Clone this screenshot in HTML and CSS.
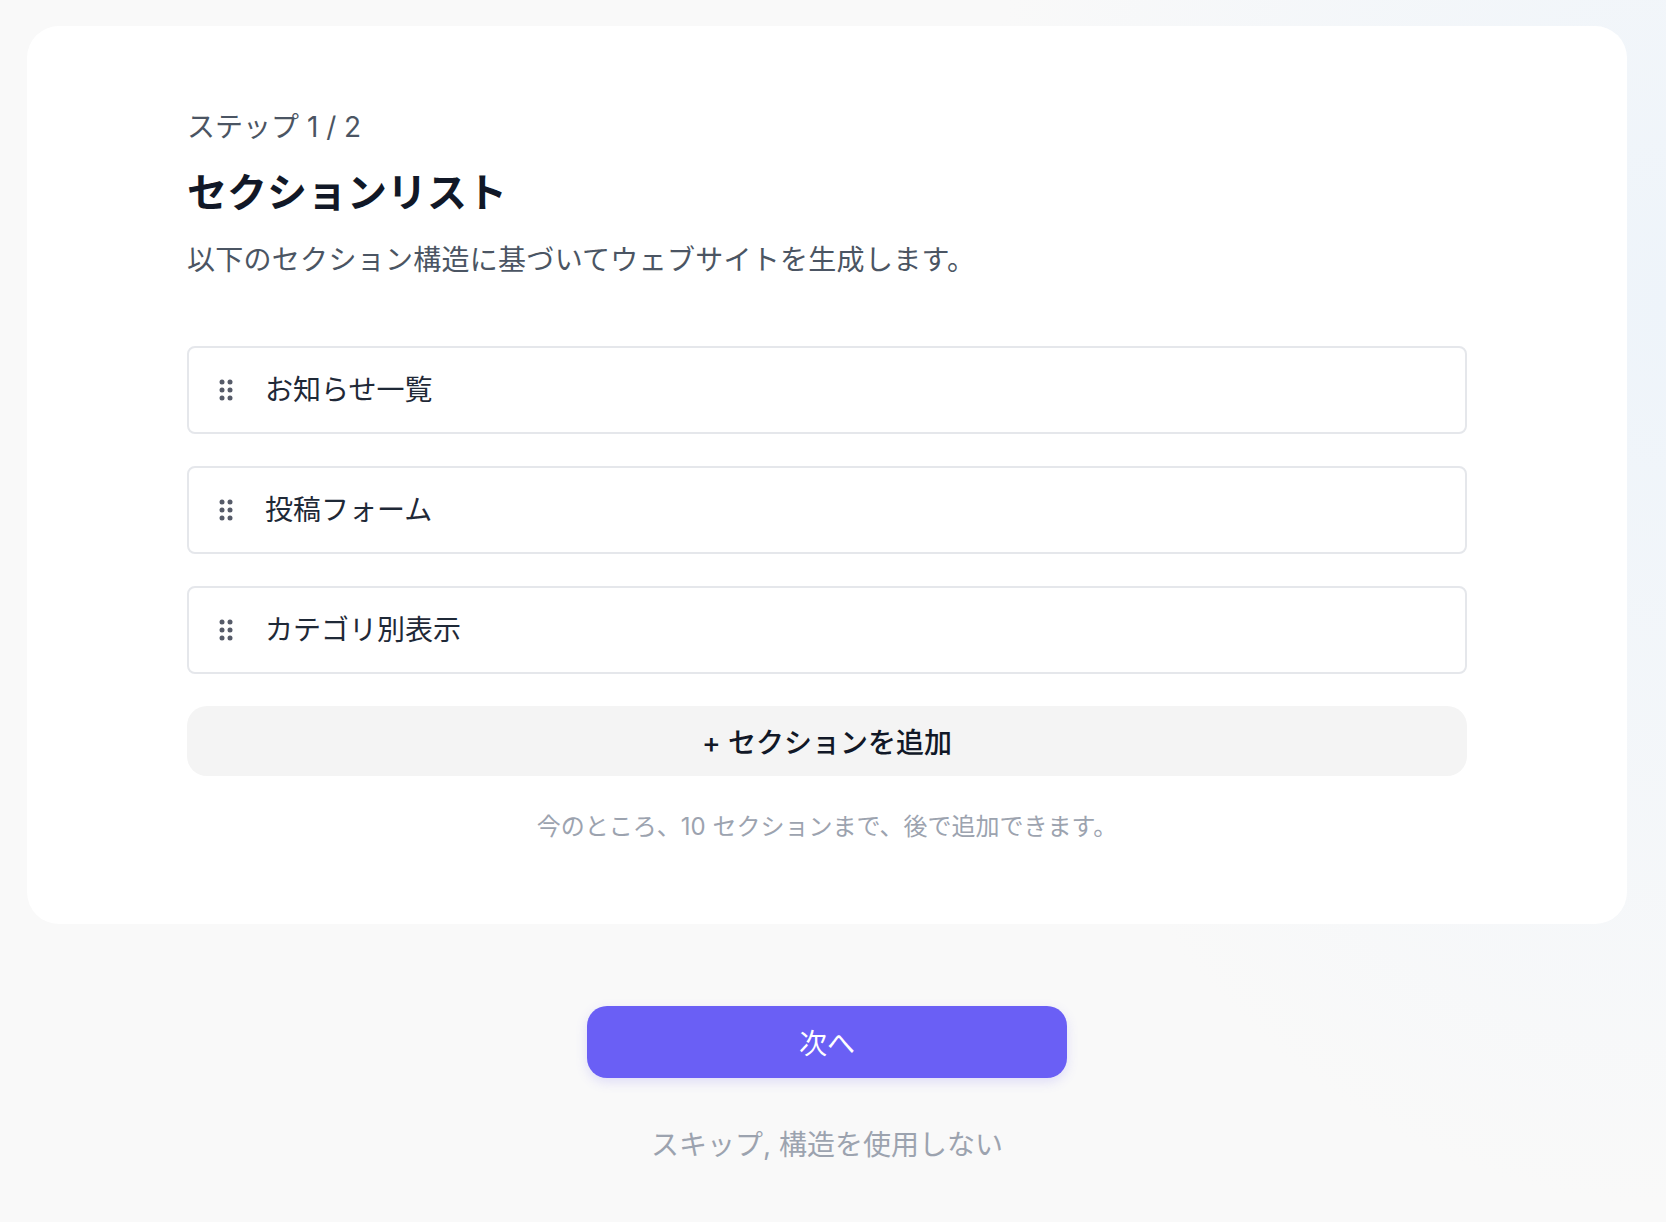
FILE: index.html
```html
<!DOCTYPE html>
<html lang="ja">
<head>
  <meta charset="UTF-8">
  <meta name="viewport" content="width=device-width, initial-scale=1.0">
  <title>セクションリスト</title>
  <link rel="stylesheet" href="styles.css">
</head>
<body>
  <div class="page">
    <div class="card">
      <div class="card-inner">
        <div class="step-label">ステップ 1 / 2</div>
        <h1 class="title">セクションリスト</h1>
        <p class="description">以下のセクション構造に基づいてウェブサイトを生成します。</p>

        <!-- Section list -->
        <div class="section-list">
          <div class="section-item">
            <svg class="grip" viewBox="0 0 14 22">
              <circle cx="3" cy="3" r="2.5"/><circle cx="11" cy="3" r="2.5"/>
              <circle cx="3" cy="11" r="2.5"/><circle cx="11" cy="11" r="2.5"/>
              <circle cx="3" cy="19" r="2.5"/><circle cx="11" cy="19" r="2.5"/>
            </svg>
            <span class="section-name">お知らせ一覧</span>
          </div>
          <div class="section-item">
            <svg class="grip" viewBox="0 0 14 22">
              <circle cx="3" cy="3" r="2.5"/><circle cx="11" cy="3" r="2.5"/>
              <circle cx="3" cy="11" r="2.5"/><circle cx="11" cy="11" r="2.5"/>
              <circle cx="3" cy="19" r="2.5"/><circle cx="11" cy="19" r="2.5"/>
            </svg>
            <span class="section-name">投稿フォーム</span>
          </div>
          <div class="section-item">
            <svg class="grip" viewBox="0 0 14 22">
              <circle cx="3" cy="3" r="2.5"/><circle cx="11" cy="3" r="2.5"/>
              <circle cx="3" cy="11" r="2.5"/><circle cx="11" cy="11" r="2.5"/>
              <circle cx="3" cy="19" r="2.5"/><circle cx="11" cy="19" r="2.5"/>
            </svg>
            <span class="section-name">カテゴリ別表示</span>
          </div>
        </div>

        <button class="add-button">+ セクションを追加</button>
        <p class="limit-note">今のところ、10 セクションまで、後で追加できます。</p>
      </div>
    </div>

    <div class="actions">
      <button class="next-button">次へ</button>
      <a class="skip-link" href="#">スキップ, 構造を使用しない</a>
    </div>
  </div>
</body>
</html>
```

FILE: styles.css
```css
:root {
  --page-bg: #f9f9f9;
  --card-bg: #ffffff;
  --text-strong: #111827;
  --text-body: #1f2937;
  --text-muted: #4b5563;
  --text-faint: #9ca3af;
  --border: #e5e7eb;
  --soft: #f4f4f4;
  --primary: #6a5ff5;
}

* {
  box-sizing: border-box;
}

body {
  margin: 0;
  min-height: 1222px;
  font-family: Inter, "Noto Sans CJK JP", sans-serif;
  color: var(--text-body);
  background-color: var(--page-bg);
  background-image: radial-gradient(ellipse 700px 900px at 100% 25%, #eef4fa 0%, rgba(249, 249, 249, 0) 100%);
}

.page {
  width: 1600px;
  margin-left: 27px;
  padding-top: 26px;
}

.card {
  background-color: var(--card-bg);
  border-radius: 32px;
  padding: 83px 0 80px;
}

.card-inner {
  width: 1280px;
  margin: 0 auto;
}

.step-label {
  font-size: 28px;
  line-height: 36px;
  color: var(--text-muted);
}

.title {
  margin: 24px 0 0;
  font-size: 40px;
  line-height: 48px;
  font-weight: 700;
  color: var(--text-strong);
}

.description {
  margin: 23px 0 0;
  font-size: 28px;
  line-height: 40px;
  letter-spacing: 0.01em;
  color: var(--text-muted);
}

.section-list {
  display: flex;
  flex-direction: column;
  gap: 32px;
  margin-top: 66px;
}

.section-item {
  display: flex;
  align-items: center;
  gap: 32px;
  height: 88px;
  padding: 0 30px;
  border: 2px solid var(--border);
  border-radius: 8px;
  background-color: var(--card-bg);
}

.grip {
  width: 14px;
  height: 22px;
  flex-shrink: 0;
  fill: #565b69;
}

.section-name {
  font-size: 28px;
  line-height: 40px;
  color: var(--text-body);
}

.add-button {
  display: block;
  width: 100%;
  height: 70px;
  margin-top: 32px;
  border: none;
  border-radius: 20px;
  background-color: var(--soft);
  font-family: inherit;
  font-size: 28px;
  font-weight: 500;
  color: var(--text-strong);
  cursor: pointer;
}

.limit-note {
  margin: 34px 0 0;
  text-align: center;
  font-size: 24px;
  line-height: 34px;
  color: var(--text-faint);
}

.actions {
  display: flex;
  flex-direction: column;
  align-items: center;
  padding-top: 82px;
}

.next-button {
  width: 480px;
  height: 72px;
  border: none;
  border-radius: 20px;
  background-color: var(--primary);
  box-shadow: 0 4px 12px rgba(106, 95, 245, 0.18);
  font-family: inherit;
  font-size: 28px;
  color: #ffffff;
  cursor: pointer;
}

.skip-link {
  margin-top: 47px;
  font-size: 28px;
  line-height: 40px;
  color: var(--text-faint);
  text-decoration: none;
}
```
